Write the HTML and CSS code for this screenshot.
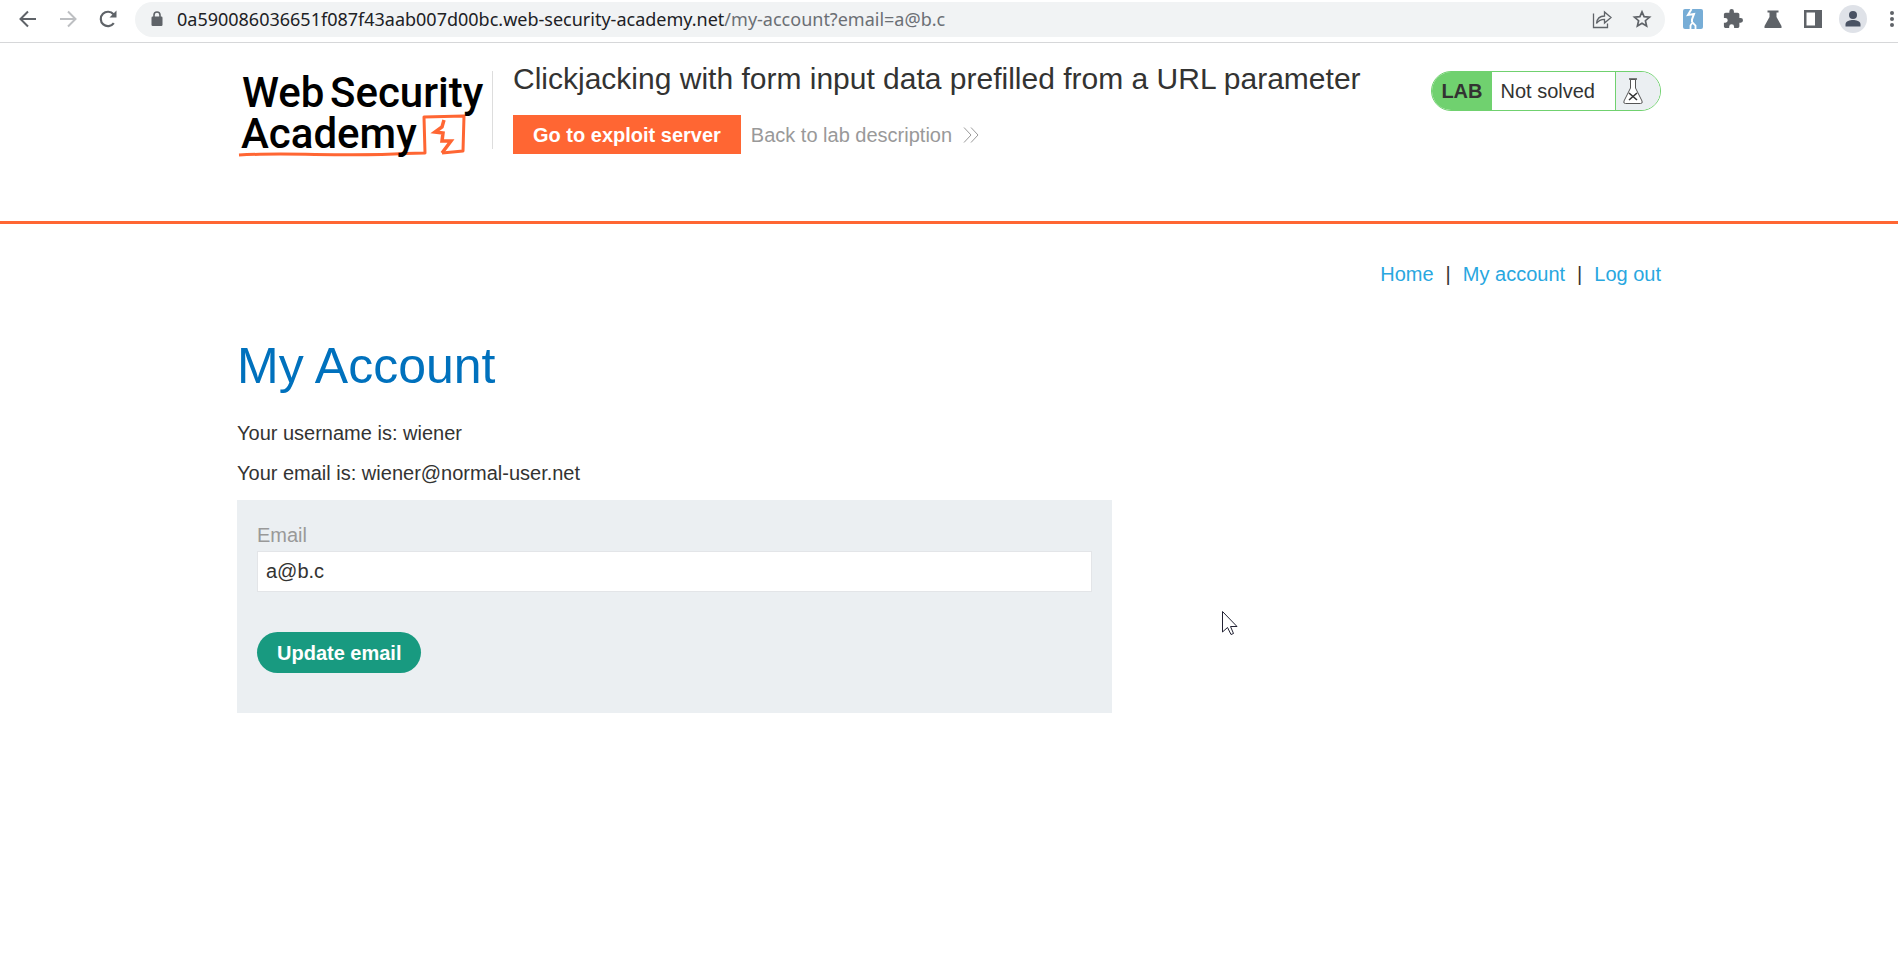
FILE: index.html
```html
<!DOCTYPE html>
<html lang="en">
<head>
<meta charset="utf-8">
<title>My Account</title>
<link rel="stylesheet" href="styles.css">
</head>
<body>
<div class="toolbar">
  <button class="tool" type="button" aria-label="Back"><svg width="20" height="20" viewBox="0 0 20 20" fill="none" stroke="#5f6368" stroke-width="2"><path d="M18 10H3M10 2.5L2.5 10L10 17.500"/></svg></button>
  <button class="tool" type="button" aria-label="Forward"><svg width="20" height="20" viewBox="0 0 20 20" fill="none" stroke="#bdbfc2" stroke-width="2"><path d="M2 10H17M10 2.500L17.500 10L10 17.500"/></svg></button>
  <button class="tool" type="button" aria-label="Reload"><svg width="20" height="20" viewBox="0 0 20 20"><path d="M15.800 14.200A7.200 7.200 0 1 1 15.500 5.300" fill="none" stroke="#5f6368" stroke-width="2.200"/><path d="M18.500 1.500V8.500H11.500Z" fill="#5f6368"/></svg></button>
  <div class="address">
    <svg width="12" height="16" viewBox="0 0 12 16"><path d="M3 6V4a3 3 0 0 1 6 0V6" fill="none" stroke="#5f6368" stroke-width="1.600"/><rect x="0.500" y="5.500" width="11" height="9.500" rx="1.200" fill="#5f6368"/></svg>
    <span class="url">0a590086036651f087f43aab007d00bc.web-security-academy.net<span class="path">/my-account?email=a@b.c</span></span>
    <button class="tool" type="button" aria-label="Share"><svg width="20" height="20" viewBox="0 0 20 20" fill="none" stroke="#5f6368" stroke-width="1.300"><path d="M1.500 4.500V18.500H15.500V14.500M4.500 14.500C5 9.500 8 7 12.500 7V3L19 8.500L12.500 14V10.400C9 10.400 6.500 11.500 4.500 14.500Z"/></svg></button>
    <button class="tool" type="button" aria-label="Bookmark"><svg width="20" height="20" viewBox="0 0 20 20" fill="none" stroke="#5f6368" stroke-width="1.700"><path d="M10 2.800L12.100 7.700L17.500 8.200L13.400 11.700L14.600 17L10 14.200L5.400 17L6.600 11.700L2.500 8.200L7.900 7.700Z"/></svg></button>
  </div>
  <div class="extensions">
    <button class="tool" type="button" aria-label="Burp Suite"><svg width="20" height="20" viewBox="0 0 20 20"><rect width="20" height="20" rx="2" fill="#77add6"/><path d="M8.500 0L5 6L11 5L9 10.500V13" fill="none" stroke="#fff" stroke-width="2"/><path d="M7.500 20V16.500L9.500 13.500L12.500 16.500V20" fill="none" stroke="#fff" stroke-width="1.800"/></svg></button>
    <button class="tool" type="button" aria-label="Extensions"><svg width="20" height="20" viewBox="1 1 22 22" fill="#5f6368"><path d="M20.500 11H19V7c0-1.100-.9-2-2-2h-4V3.500a2.500 2.500 0 0 0-5 0V5H4c-1.100 0-2 .9-2 2v3.800h1.500a2.700 2.700 0 0 1 0 5.400H2V20c0 1.100.9 2 2 2h3.800v-1.500a2.700 2.700 0 0 1 5.400 0V22H17c1.100 0 2-.9 2-2v-4h1.500a2.500 2.500 0 0 0 0-5z"/></svg></button>
    <button class="tool" type="button" aria-label="Labs"><svg width="18" height="20" viewBox="0 0 18 20" fill="#5f6368"><path d="M3.500 1.500H14.500V3.500H12.500V8L17.500 17V19H0.500V17L5.500 8V3.500H3.500Z"/></svg></button>
    <button class="tool" type="button" aria-label="Side panel"><svg width="18" height="18" viewBox="0 0 18 18"><path d="M0 0H18V18H0ZM2.500 2.500V15.500H11V2.500Z" fill="#5f6368" fill-rule="evenodd"/></svg></button>
    <button class="tool" type="button" aria-label="Profile"><svg width="28" height="28" viewBox="0 0 28 28" fill="#4a5364"><circle cx="14" cy="14" r="14" fill="#dfe2e8"/><circle cx="14" cy="10" r="4"/><path d="M6.500 21.500V19.500C6.500 16 11 15 14 15S21.500 16 21.500 19.500V21.500Z"/></svg></button>
    <button class="tool menu" type="button" aria-label="Menu"><svg width="12" height="20" viewBox="0 0 12 20" fill="#5f6368"><circle cx="6" cy="4" r="2"/><circle cx="6" cy="10" r="2"/><circle cx="6" cy="16" r="2"/></svg></button>
  </div>
</div>

<header class="lab-header">
  <div class="container lab-row">
    <svg class="logo" width="256" height="96" viewBox="0 0 256 96" role="img" aria-label="Web Security Academy">
      <path d="M2 84C50 81 110 86 168 82.500L188 82L187 46L227 45L226 80L205 82" fill="none" stroke="#ff6633" stroke-width="3" stroke-linejoin="round"/>
      <path d="M207 49L205 56L198 61L206 62L205 70L214 70L205 82" fill="none" stroke="#ff6633" stroke-width="3.500"/>
      <g class="logo-text"><text x="5" y="36">Web</text><text x="93" y="36">Security</text><text x="4" y="77">Academy</text></g>
      <path d="M255.500 0V78" stroke="#dddddd"/>
    </svg>
    <div class="lab-title">
      <h2>Clickjacking with form input data prefilled from a URL parameter</h2>
      <div class="lab-actions">
        <a class="exploit" href="#">Go to exploit server</a>
        <a class="back" href="#">Back to lab description <svg width="16" height="16" viewBox="0 0 16 16" fill="none" stroke="#999" stroke-width="1"><path d="M1 0.500L8 8L1 15.500M8 0.500L15 8L8 15.500"/></svg></a>
      </div>
    </div>
    <div class="status">
      <span class="tag">LAB</span>
      <span class="state">Not solved</span>
      <span class="flask"><svg width="20" height="26" viewBox="0 0 20 26"><path d="M7.500 1.500V10L1 23Q0 25.500 2.500 25.500H17.500Q20 25.500 19 23L12.500 10V1.500Z" fill="#fff" stroke="#555"/><path d="M6 1H14" stroke="#555" stroke-width="1.500"/><path d="M6 15L14 22M14 15L6 22" stroke="#333" stroke-width="1.600"/></svg></span>
    </div>
  </div>
</header>

<main class="container">
  <nav class="links"><a href="#">Home</a><span>|</span><a href="#">My account</a><span>|</span><a href="#">Log out</a></nav>
  <h1>My Account</h1>
  <p>Your username is: wiener</p>
  <p>Your email is: wiener@normal-user.net</p>
  <form class="email-form">
    <label for="email">Email</label>
    <input id="email" type="email" name="email" value="a@b.c">
    <button class="update" type="button">Update email</button>
  </form>
</main>

<svg class="cursor" width="16" height="26" viewBox="0 0 16 26"><path d="M0.500 0.500V21L5.500 16.500L9 23.500L11.500 22.500L8.500 15.500H15Z" fill="#fff" stroke="#222233"/></svg>
</body>
</html>
```
FILE: styles.css
```css
* {
  box-sizing: border-box;
}

body {
  margin: 0;
  background: #fff;
  color: #333332;
  font-family: "Liberation Sans", Arial, sans-serif;
  font-size: 20px;
  line-height: 24px;
}

a {
  text-decoration: none;
}

.toolbar {
  display: flex;
  align-items: center;
  height: 43px;
  padding: 0 0 4px 8px;
  border-bottom: 1px solid #d6d7d9;
}

.tool {
  display: flex;
  flex: none;
  align-items: center;
  justify-content: center;
  width: 40px;
  height: 35px;
  padding: 0;
  border: 0;
  background: none;
}

.menu {
  justify-content: flex-end;
  width: 25px;
}

.address {
  display: flex;
  flex: 1;
  align-items: center;
  height: 35px;
  margin-left: 7px;
  padding: 0 3px 0 16px;
  border-radius: 18px;
  background: #f1f3f4;
}

.url {
  flex: 1;
  margin-left: 14px;
  color: #202124;
  font-family: "Noto Sans", sans-serif;
  font-size: 18px;
  white-space: nowrap;
}

.path {
  color: #6b6f74;
}

.extensions {
  display: flex;
  margin-left: 8px;
}

.container {
  max-width: 1424px;
  margin: 0 auto;
}

.lab-header {
  padding: 28px 0 54px;
  border-bottom: 3px solid #ff6633;
}

.lab-row {
  display: flex;
  align-items: flex-start;
}

.logo {
  flex: none;
}

.logo-text {
  fill: #000;
  font-family: Roboto, sans-serif;
  font-size: 42px;
  font-weight: 500;
}

.lab-title {
  flex: 1;
  margin-left: 20px;
}

.lab-title h2 {
  margin: -10px 0 18px;
  font-size: 30px;
  font-weight: 400;
  line-height: 36px;
}

.lab-actions {
  display: flex;
  gap: 10px;
  align-items: center;
}

.exploit {
  padding: 8px 20px 7px;
  background: #ff6633;
  color: #fff;
  font-weight: 700;
}

.back {
  color: #999;
}

.back svg {
  margin-left: 5px;
  vertical-align: -1px;
}

.status {
  display: flex;
  height: 40px;
  overflow: hidden;
  border: 1px solid #70d16f;
  border-radius: 20px;
  line-height: 38px;
}

.tag {
  padding: 0 9px;
  background: #70d16f;
  font-weight: 700;
}

.state {
  padding: 0 20px 0 9px;
}

.flask {
  display: flex;
  align-items: center;
  width: 45px;
  padding-left: 7px;
  border-left: 1px solid #70d16f;
  background: #ebeff2;
}

.links {
  display: flex;
  justify-content: flex-end;
  gap: 12px;
  padding-top: 38px;
}

.links a {
  color: #29a7df;
}

h1 {
  margin: 50px 0 25px;
  color: #0071bd;
  font-size: 50px;
  font-weight: 400;
  line-height: 60px;
}

p {
  margin: 0 0 16px;
}

.email-form {
  display: flex;
  flex-direction: column;
  align-items: flex-start;
  width: 875px;
  max-width: 100%;
  margin-top: -1px;
  padding: 23px 20px 40px;
  background: #ebeff2;
}

.email-form label {
  margin-bottom: 4px;
  color: #999;
}

.email-form input {
  width: 100%;
  height: 41px;
  padding: 0 8px;
  border: 1px solid #e3e5e8;
  background: #fff;
  color: #333332;
  font: inherit;
}

.update {
  height: 41px;
  margin-top: 40px;
  padding: 0 20px;
  border: 0;
  border-radius: 21px;
  background: #189a80;
  color: #fff;
  font: inherit;
  font-weight: 700;
}

.cursor {
  position: absolute;
  top: 611px;
  left: 1222px;
}
```
